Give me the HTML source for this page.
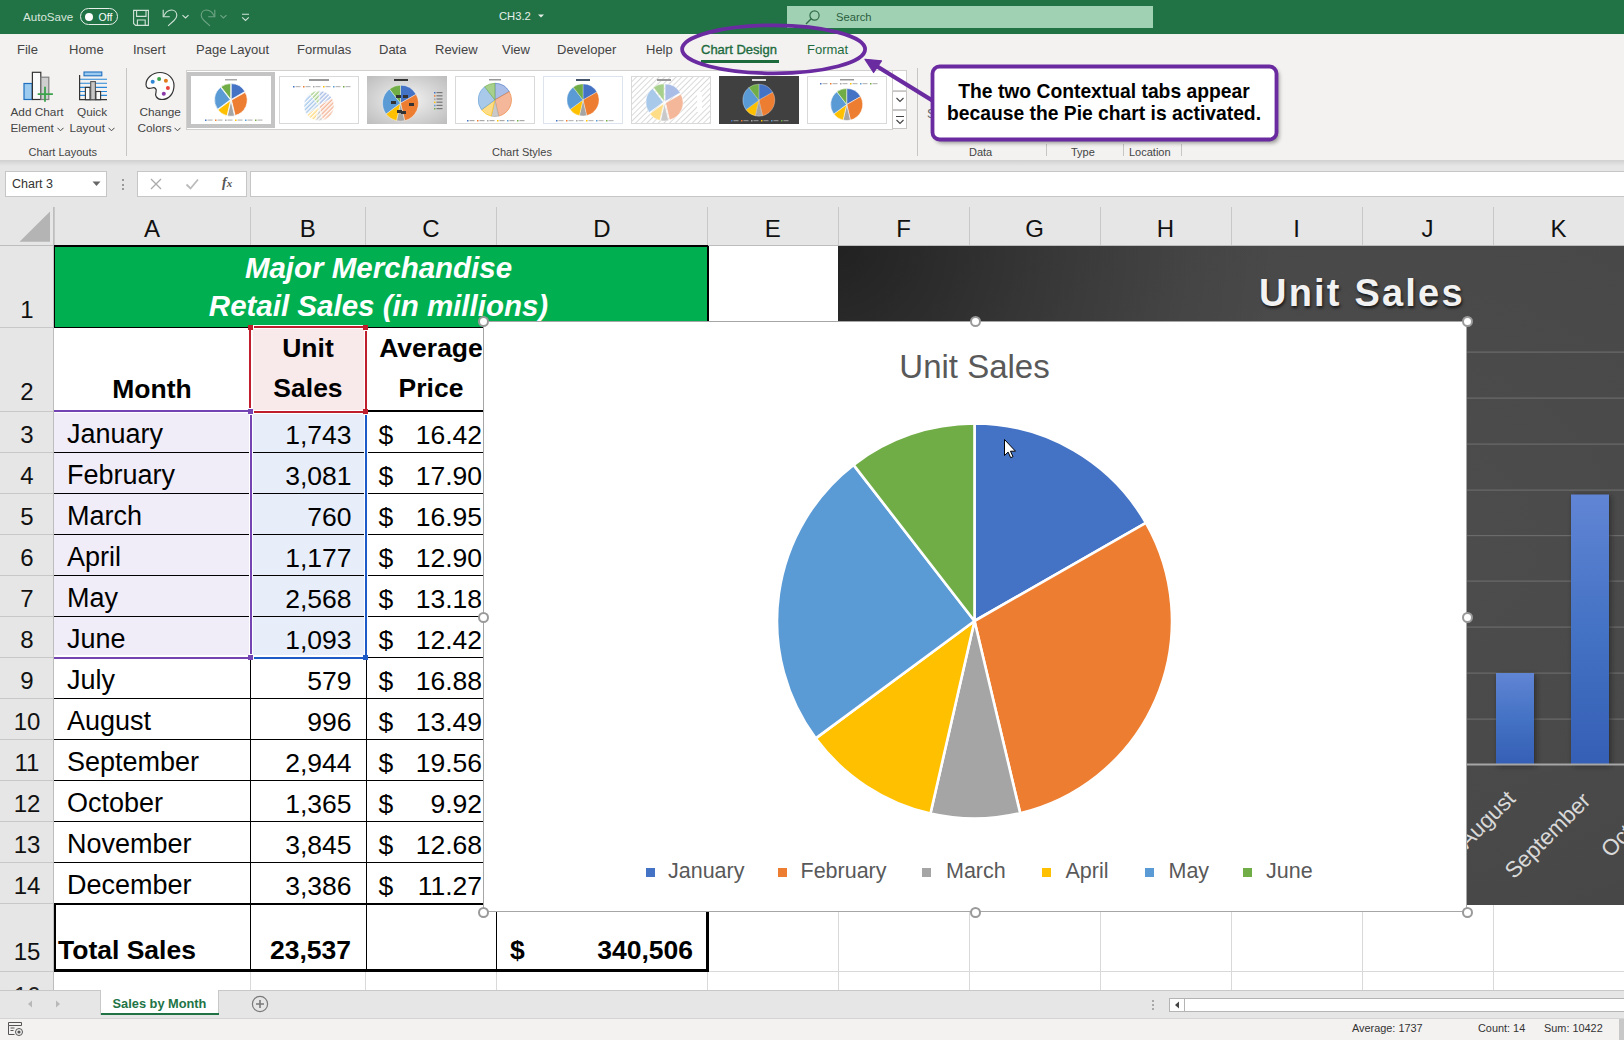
<!DOCTYPE html>
<html><head><meta charset="utf-8">
<style>
*{margin:0;padding:0;box-sizing:border-box}
html,body{width:1624px;height:1040px;overflow:hidden;background:#fff;font-family:"Liberation Sans",sans-serif}
.a{position:absolute}
svg{display:block}
.t{position:absolute;white-space:nowrap;line-height:1}
#title{left:0;top:0;width:1624px;height:34px;background:#217346}
#tabs{left:0;top:34px;width:1624px;height:126px;background:#f3f2f1}
.tab{position:absolute;top:43px;font-size:13px;color:#444;white-space:nowrap;line-height:1}
.rl{position:absolute;font-size:12.5px;color:#444;white-space:nowrap;line-height:1}
.gl{position:absolute;top:147px;font-size:12px;color:#444;white-space:nowrap;line-height:1}
.sep{position:absolute;width:1px;background:#c8c6c4}
.thumb{position:absolute;top:76px;width:80px;height:48px;background:#fff;border:1px solid #d6d6d6}
</style></head><body>

<!-- TITLE BAR -->
<div class="a" id="title"></div>
<div class="t" style="left:23px;top:11px;font-size:11.6px;color:#d8e6dd">AutoSave</div>
<div class="a" style="left:80px;top:8px;width:38px;height:17px;border:1.3px solid #e8efe9;border-radius:9px"></div>
<div class="a" style="left:84.5px;top:12.5px;width:8px;height:8px;border-radius:50%;background:#fff"></div>
<div class="t" style="left:98.5px;top:11.5px;font-size:10.5px;color:#fff">Off</div>
<!-- save icon -->
<svg class="a" style="left:120px;top:0" width="140" height="34" viewBox="120 0 140 34">
<path d="M133.6 10.4H148.4V25.4H135.6L133.6 23.4Z" fill="none" stroke="#d2e3d8" stroke-width="1.1"/>
<path d="M136.6 10.4V16.4H146V10.4M137.4 25.4V20H145.2V25.4" fill="none" stroke="#d2e3d8" stroke-width="1.1"/>
<path d="M163.2 9.8V16.8H169.8" fill="none" stroke="#d2e3d8" stroke-width="1.1"/>
<path d="M163.6 16.4C165.5 12 168.5 10 171.5 10C174.8 10 176.8 12.5 176.8 15.5C176.8 17.5 175.5 19 174 20.5L168.1 25.9" fill="none" stroke="#d2e3d8" stroke-width="1.1"/>
<path d="M182.5 15.1L185.5 17.9L188.5 15.1" fill="none" stroke="#d2e3d8" stroke-width="1.1"/>
<path d="M214.8 9.8V16.8H208.2" fill="none" stroke="#6fa585" stroke-width="1.1"/>
<path d="M214.4 16.4C212.5 12 209.5 10 206.5 10C203.2 10 201.2 12.5 201.2 15.5C201.2 17.5 202.5 19 204 20.5L210 25.9" fill="none" stroke="#6fa585" stroke-width="1.1"/>
<path d="M220.4 15.1L223.4 17.9L226.5 15.1" fill="none" stroke="#6fa585" stroke-width="1.1"/>
<path d="M242 14.2H249M242.2 17.4L245.5 20.4L248.8 17.4" fill="none" stroke="#d2e3d8" stroke-width="1.1"/>
</svg>
<div class="t" style="left:499px;top:11px;font-size:11.2px;color:#e6efe9">CH3.2</div>
<svg class="a" style="left:537.5px;top:14px" width="6" height="4" viewBox="0 0 6 4"><path d="M0 0.5h6L3 3.5z" fill="#e6efe9"/></svg>
<div class="a" style="left:787px;top:6px;width:366px;height:22px;background:#a0d1b2"></div>
<svg class="a" style="left:804px;top:9px" width="17" height="17" viewBox="0 0 17 17"><circle cx="10.5" cy="6.5" r="4.6" fill="none" stroke="#2f6b47" stroke-width="1.2"/><path d="M7.2 9.8L2 15" stroke="#2f6b47" stroke-width="1.3"/></svg>
<div class="t" style="left:836px;top:11.5px;font-size:11.2px;color:#2a5e40">Search</div>

<!-- TABS + RIBBON -->
<div class="a" id="tabs"></div>
<div class="tab" style="left:17px">File</div>
<div class="tab" style="left:69px">Home</div>
<div class="tab" style="left:133px">Insert</div>
<div class="tab" style="left:196px">Page Layout</div>
<div class="tab" style="left:297px">Formulas</div>
<div class="tab" style="left:379px">Data</div>
<div class="tab" style="left:435px">Review</div>
<div class="tab" style="left:502px">View</div>
<div class="tab" style="left:557px">Developer</div>
<div class="tab" style="left:646px">Help</div>
<div class="tab" style="left:701px;color:#1d6b3d;-webkit-text-stroke:0.35px #1d6b3d">Chart Design</div>
<div class="a" style="left:701px;top:60px;width:78px;height:3px;background:#1d6b3d"></div>
<div class="tab" style="left:807px;color:#1d6b3d">Format</div>

<!-- RIBBON_BODY -->
<svg class="a" style="left:0;top:64px" width="190" height="96" viewBox="0 64 190 96">
 <rect x="24" y="83.5" width="8.2" height="16" fill="#9ccbef" stroke="#1f6fc0" stroke-width="1.2"/>
 <rect x="32.4" y="72.3" width="8.4" height="27.2" fill="#fafafa" stroke="#333" stroke-width="1.2"/>
 <rect x="41" y="77.2" width="7.8" height="22.3" fill="#cfcfcf" stroke="#808080" stroke-width="1.2"/>
 <path d="M37.7 94.2H52.9M45 86.8V101.7" stroke="#3aa24a" stroke-width="1.8"/>
 <rect x="84" y="72" width="17.8" height="3.8" fill="#9ccbef" stroke="#1f6fc0" stroke-width="1.1"/>
 <path d="M80 79.2H107M80 83.3H107M80 87.4H107M80 91.5H107M80 95.4H107" stroke="#2a86d6" stroke-width="1.1"/>
 <path d="M79.6 75V99.7H107" fill="none" stroke="#333" stroke-width="1.2"/>
 <rect x="85.4" y="87.4" width="4.6" height="12.3" fill="#fafafa" stroke="#333" stroke-width="1.1"/>
 <rect x="90.7" y="81.6" width="4.7" height="18.1" fill="#c6c6c6" stroke="#555" stroke-width="1.1"/>
 <rect x="95.9" y="91.5" width="4.7" height="8.2" fill="#fafafa" stroke="#333" stroke-width="1.1"/>
 <path d="M160 72.5c-8 0-14 6-14 12 0 4 3 4.5 6 3.5 3-1 5 1 4 4-1 3 0 7.5 6 7.5 7 0 12-6 12-14 0-7-6-13-14-13z" fill="#fdfdfd" stroke="#333" stroke-width="1.2"/>
 <circle cx="152.7" cy="81.8" r="2" fill="#2f86d4"/><circle cx="159.1" cy="79" r="2" fill="#3aa24a"/><circle cx="165.9" cy="80.7" r="2" fill="#e07b1c"/><circle cx="167.9" cy="88" r="2" fill="#e8403a"/><circle cx="163.8" cy="93.8" r="2" fill="#8a3aa8"/>
</svg>
<div class="rl" style="left:10.5px;top:107px;font-size:11.8px">Add Chart</div>
<div class="rl" style="left:10.5px;top:123px;font-size:11.8px">Element</div>
<svg class="a" style="left:57px;top:127px" width="7" height="5" viewBox="0 0 7 5"><path d="M0.5 0.8L3.5 3.8 6.5 0.8" fill="none" stroke="#444" stroke-width="1"/></svg>
<div class="rl" style="left:77px;top:107px;font-size:11.8px">Quick</div>
<div class="rl" style="left:69.5px;top:123px;font-size:11.8px">Layout</div>
<div class="a" style="left:108px;top:127px"><svg width="7" height="5" viewBox="0 0 7 5"><path d="M0.5 0.8L3.5 3.8 6.5 0.8" fill="none" stroke="#444" stroke-width="1"/></svg></div>
<div class="sep" style="left:126px;top:68px;height:88px"></div>
<div class="rl" style="left:139.5px;top:107px;font-size:11.8px">Change</div>
<div class="rl" style="left:137.5px;top:123px;font-size:11.8px">Colors</div>
<div class="a" style="left:174px;top:127px"><svg width="7" height="5" viewBox="0 0 7 5"><path d="M0.5 0.8L3.5 3.8 6.5 0.8" fill="none" stroke="#444" stroke-width="1"/></svg></div>
<div class="gl" style="left:28.5px;font-size:11px">Chart Layouts</div>
<div class="gl" style="left:492px;font-size:11px">Chart Styles</div>
<div class="gl" style="left:969px;font-size:11px">Data</div>
<div class="gl" style="left:1071px;font-size:11px">Type</div>
<div class="gl" style="left:1129px;font-size:11px">Location</div>
<div class="sep" style="left:917px;top:68px;height:88px"></div>
<div class="sep" style="left:1046px;top:144px;height:12px"></div>
<div class="sep" style="left:1123px;top:144px;height:12px"></div>
<div class="sep" style="left:1181px;top:144px;height:12px"></div>
<!-- gallery -->
<div class="a" style="left:186px;top:70px;width:707px;height:60px;background:#fff;border:1px solid #d2d0ce"></div>
<div class="a" style="left:187px;top:72px;width:88px;height:56px;background:#c4c4c4"></div>
<div class="a" style="left:892px;top:70px;width:15px;height:21px;border:1px solid #d2d0ce;background:#fff"></div>
<div class="a" style="left:892px;top:91px;width:15px;height:19px;border:1px solid #c8c6c4;background:#fff"></div>
<div class="a" style="left:892px;top:110px;width:15px;height:19px;border:1px solid #c8c6c4;background:#fff"></div>
<svg class="a" style="left:894.5px;top:96px" width="10" height="8" viewBox="0 0 10 8"><path d="M1.5 2L5 5.5 8.5 2" fill="none" stroke="#444" stroke-width="1.1"/></svg>
<svg class="a" style="left:894.5px;top:114px" width="10" height="12" viewBox="0 0 10 12"><path d="M1 2.5H9M1.5 6L5 9.5 8.5 6" fill="none" stroke="#444" stroke-width="1.1"/></svg>
<!-- THUMBS -->
<svg class="a" style="left:0;top:0" width="900" height="130" viewBox="0 0 900 130"><rect x="191" y="76" width="80" height="48" fill="#fff"/><rect x="225" y="79" width="12" height="1.5" fill="#aaa"/><path d="M231.2,99.4L231.2,83.6A15.8,15.8 0 0 1 244.9,91.5Z" fill="#4472c4" stroke="#fff" stroke-width="0.7"/><path d="M231.5,100.1L245.2,92.3A15.8,15.8 0 0 1 235.1,115.5Z" fill="#ed7d31" stroke="#fff" stroke-width="0.7"/><path d="M230.9,100.5L234.6,115.9A15.8,15.8 0 0 1 227.4,115.9Z" fill="#a5a5a5" stroke="#fff" stroke-width="0.7"/><path d="M230.6,100.4L227.0,115.8A15.8,15.8 0 0 1 217.9,109.8Z" fill="#ffc000" stroke="#fff" stroke-width="0.7"/><path d="M230.3,99.8L217.6,109.2A15.8,15.8 0 0 1 220.6,87.3Z" fill="#5b9bd5" stroke="#fff" stroke-width="0.7"/><path d="M230.7,99.3L221.0,86.8A15.8,15.8 0 0 1 230.7,83.5Z" fill="#70ad47" stroke="#fff" stroke-width="0.7"/><rect x="205.0" y="119.5" width="1.5" height="1.5" fill="#4472c4"/><rect x="207.5" y="119.5" width="5" height="1.2" fill="#bbb"/><rect x="215.0" y="119.5" width="1.5" height="1.5" fill="#ed7d31"/><rect x="217.5" y="119.5" width="5" height="1.2" fill="#bbb"/><rect x="225.0" y="119.5" width="1.5" height="1.5" fill="#a5a5a5"/><rect x="227.5" y="119.5" width="5" height="1.2" fill="#bbb"/><rect x="235.0" y="119.5" width="1.5" height="1.5" fill="#ffc000"/><rect x="237.5" y="119.5" width="5" height="1.2" fill="#bbb"/><rect x="245.0" y="119.5" width="1.5" height="1.5" fill="#5b9bd5"/><rect x="247.5" y="119.5" width="5" height="1.2" fill="#bbb"/><rect x="255.0" y="119.5" width="1.5" height="1.5" fill="#70ad47"/><rect x="257.5" y="119.5" width="5" height="1.2" fill="#bbb"/><rect x="279.5" y="76.5" width="79" height="47" fill="#fff" stroke="#d9d9d9" stroke-width="1"/><rect x="309" y="79" width="20" height="2" fill="#999"/><rect x="293.0" y="86" width="1.5" height="1.5" fill="#4472c4"/><rect x="295.5" y="86" width="5" height="1.2" fill="#bbb"/><rect x="303.0" y="86" width="1.5" height="1.5" fill="#ed7d31"/><rect x="305.5" y="86" width="5" height="1.2" fill="#bbb"/><rect x="313.0" y="86" width="1.5" height="1.5" fill="#a5a5a5"/><rect x="315.5" y="86" width="5" height="1.2" fill="#bbb"/><rect x="323.0" y="86" width="1.5" height="1.5" fill="#ffc000"/><rect x="325.5" y="86" width="5" height="1.2" fill="#bbb"/><rect x="333.0" y="86" width="1.5" height="1.5" fill="#5b9bd5"/><rect x="335.5" y="86" width="5" height="1.2" fill="#bbb"/><rect x="343.0" y="86" width="1.5" height="1.5" fill="#70ad47"/><rect x="345.5" y="86" width="5" height="1.2" fill="#bbb"/><defs><pattern id="st" width="3" height="3" patternUnits="userSpaceOnUse" patternTransform="rotate(45)"><rect width="1.5" height="3" fill="#fff"/></pattern></defs><path d="M319.0,105.7L319.0,90.7A15,15 0 0 1 332.0,98.2Z" fill="#a9bde6" stroke="#fff" stroke-width="0.5"/><path d="M319.0,105.7L332.0,98.2A15,15 0 0 1 322.5,120.3Z" fill="#f4b79a" stroke="#fff" stroke-width="0.5"/><path d="M319.0,105.7L322.5,120.3A15,15 0 0 1 315.7,120.3Z" fill="#c9c9c9" stroke="#fff" stroke-width="0.5"/><path d="M319.0,105.7L315.7,120.3A15,15 0 0 1 306.9,114.6Z" fill="#ffdc86" stroke="#fff" stroke-width="0.5"/><path d="M319.0,105.7L306.9,114.6A15,15 0 0 1 309.8,93.8Z" fill="#a9c9ea" stroke="#fff" stroke-width="0.5"/><path d="M319.0,105.7L309.8,93.8A15,15 0 0 1 319.0,90.7Z" fill="#a8d08d" stroke="#fff" stroke-width="0.5"/><circle cx="319" cy="105.7" r="15.3" fill="url(#st)"/><defs><radialGradient id="g3" cx="0.5" cy="0.5" r="0.7"><stop offset="0" stop-color="#f4f4f4"/><stop offset="1" stop-color="#bdbdbd"/></radialGradient></defs><rect x="367" y="76" width="80" height="48" fill="url(#g3)"/><rect x="394" y="79" width="14" height="2" fill="#333"/><path d="M400.5,103.2L400.5,85.2A18,18 0 0 1 416.1,94.3Z" fill="#4472c4" stroke="#fff" stroke-width="0.4"/><path d="M400.5,103.2L416.1,94.3A18,18 0 0 1 404.7,120.7Z" fill="#ed7d31" stroke="#fff" stroke-width="0.4"/><path d="M400.5,103.2L404.7,120.7A18,18 0 0 1 396.5,120.7Z" fill="#a5a5a5" stroke="#fff" stroke-width="0.4"/><path d="M400.5,103.2L396.5,120.7A18,18 0 0 1 386.0,113.9Z" fill="#ffc000" stroke="#fff" stroke-width="0.4"/><path d="M400.5,103.2L386.0,113.9A18,18 0 0 1 389.5,89.0Z" fill="#5b9bd5" stroke="#fff" stroke-width="0.4"/><path d="M400.5,103.2L389.5,89.0A18,18 0 0 1 400.5,85.2Z" fill="#70ad47" stroke="#fff" stroke-width="0.4"/><rect x="396" y="95" width="5" height="3" fill="#333"/><rect x="403" y="95" width="5" height="3" fill="#333"/><rect x="391" y="101" width="5" height="3" fill="#333"/><rect x="397" y="110" width="5" height="3" fill="#333"/><rect x="401" y="111" width="5" height="3" fill="#333"/><rect x="409" y="103" width="5" height="3" fill="#333"/><rect x="434" y="92.0" width="1.5" height="1.5" fill="#4472c4"/><rect x="436.5" y="92.0" width="6" height="1.2" fill="#777"/><rect x="434" y="95.2" width="1.5" height="1.5" fill="#ed7d31"/><rect x="436.5" y="95.2" width="6" height="1.2" fill="#777"/><rect x="434" y="98.4" width="1.5" height="1.5" fill="#a5a5a5"/><rect x="436.5" y="98.4" width="6" height="1.2" fill="#777"/><rect x="434" y="101.6" width="1.5" height="1.5" fill="#ffc000"/><rect x="436.5" y="101.6" width="6" height="1.2" fill="#777"/><rect x="434" y="104.8" width="1.5" height="1.5" fill="#5b9bd5"/><rect x="436.5" y="104.8" width="6" height="1.2" fill="#777"/><rect x="434" y="108.0" width="1.5" height="1.5" fill="#70ad47"/><rect x="436.5" y="108.0" width="6" height="1.2" fill="#777"/><rect x="455.5" y="76.5" width="79" height="47" fill="#fff" stroke="#d9d9d9" stroke-width="1"/><rect x="489" y="79" width="12" height="1.5" fill="#999"/><path d="M494.9,99.9L494.9,83.3A16.6,16.6 0 0 1 509.3,91.7Z" fill="#a9bde6" stroke="#4472c4" stroke-width="0.6"/><path d="M494.9,99.9L509.3,91.7A16.6,16.6 0 0 1 498.7,116.1Z" fill="#f4b79a" stroke="#ed7d31" stroke-width="0.6"/><path d="M494.9,99.9L498.7,116.1A16.6,16.6 0 0 1 491.2,116.1Z" fill="#c9c9c9" stroke="#a5a5a5" stroke-width="0.6"/><path d="M494.9,99.9L491.2,116.1A16.6,16.6 0 0 1 481.5,109.8Z" fill="#ffdc86" stroke="#ffc000" stroke-width="0.6"/><path d="M494.9,99.9L481.5,109.8A16.6,16.6 0 0 1 484.7,86.8Z" fill="#a9c9ea" stroke="#5b9bd5" stroke-width="0.6"/><path d="M494.9,99.9L484.7,86.8A16.6,16.6 0 0 1 494.9,83.3Z" fill="#a8d08d" stroke="#70ad47" stroke-width="0.6"/><rect x="467.0" y="120" width="1.5" height="1.5" fill="#4472c4"/><rect x="469.5" y="120" width="5" height="1.2" fill="#aaa"/><rect x="477.0" y="120" width="1.5" height="1.5" fill="#ed7d31"/><rect x="479.5" y="120" width="5" height="1.2" fill="#aaa"/><rect x="487.0" y="120" width="1.5" height="1.5" fill="#a5a5a5"/><rect x="489.5" y="120" width="5" height="1.2" fill="#aaa"/><rect x="497.0" y="120" width="1.5" height="1.5" fill="#ffc000"/><rect x="499.5" y="120" width="5" height="1.2" fill="#aaa"/><rect x="507.0" y="120" width="1.5" height="1.5" fill="#5b9bd5"/><rect x="509.5" y="120" width="5" height="1.2" fill="#aaa"/><rect x="517.0" y="120" width="1.5" height="1.5" fill="#70ad47"/><rect x="519.5" y="120" width="5" height="1.2" fill="#aaa"/><rect x="543.5" y="76.5" width="79" height="47" fill="#fff" stroke="#dde4ee" stroke-width="1"/><rect x="576" y="79" width="14" height="2" fill="#44546a"/><path d="M583.0,99.9L583.0,83.9A16,16 0 0 1 596.9,92.0Z" fill="#4472c4" stroke="#fff" stroke-width="0.3"/><path d="M583.0,99.9L596.9,92.0A16,16 0 0 1 586.7,115.5Z" fill="#ed7d31" stroke="#fff" stroke-width="0.3"/><path d="M583.0,99.9L586.7,115.5A16,16 0 0 1 579.4,115.5Z" fill="#a5a5a5" stroke="#fff" stroke-width="0.3"/><path d="M583.0,99.9L579.4,115.5A16,16 0 0 1 570.1,109.4Z" fill="#ffc000" stroke="#fff" stroke-width="0.3"/><path d="M583.0,99.9L570.1,109.4A16,16 0 0 1 573.2,87.2Z" fill="#5b9bd5" stroke="#fff" stroke-width="0.3"/><path d="M583.0,99.9L573.2,87.2A16,16 0 0 1 583.0,83.9Z" fill="#70ad47" stroke="#fff" stroke-width="0.3"/><rect x="556.0" y="120" width="1.5" height="1.5" fill="#4472c4"/><rect x="558.5" y="120" width="5" height="1.2" fill="#bbb"/><rect x="566.0" y="120" width="1.5" height="1.5" fill="#ed7d31"/><rect x="568.5" y="120" width="5" height="1.2" fill="#bbb"/><rect x="576.0" y="120" width="1.5" height="1.5" fill="#a5a5a5"/><rect x="578.5" y="120" width="5" height="1.2" fill="#bbb"/><rect x="586.0" y="120" width="1.5" height="1.5" fill="#ffc000"/><rect x="588.5" y="120" width="5" height="1.2" fill="#bbb"/><rect x="596.0" y="120" width="1.5" height="1.5" fill="#5b9bd5"/><rect x="598.5" y="120" width="5" height="1.2" fill="#bbb"/><rect x="606.0" y="120" width="1.5" height="1.5" fill="#70ad47"/><rect x="608.5" y="120" width="5" height="1.2" fill="#bbb"/><defs><pattern id="st6" width="4" height="4" patternUnits="userSpaceOnUse" patternTransform="rotate(45)"><rect width="4" height="4" fill="#fff"/><rect width="1" height="4" fill="#d9d9d9"/></pattern></defs><rect x="631.5" y="76.5" width="79" height="47" fill="url(#st6)" stroke="#d9d9d9" stroke-width="1"/><rect x="657" y="79" width="14" height="2" fill="#999"/><path d="M665.1,101.4L665.1,83.9A17.5,17.5 0 0 1 680.3,92.7Z" fill="#a9bde6" stroke="#fff" stroke-width="0.5"/><path d="M665.6,102.9L680.8,94.2A17.5,17.5 0 0 1 669.6,119.9Z" fill="#f4b79a" stroke="#fff" stroke-width="0.5"/><path d="M664.5,103.6L668.6,120.6A17.5,17.5 0 0 1 660.6,120.7Z" fill="#c9c9c9" stroke="#fff" stroke-width="0.5"/><path d="M663.8,103.4L659.9,120.5A17.5,17.5 0 0 1 649.8,113.8Z" fill="#ffdc86" stroke="#fff" stroke-width="0.5"/><path d="M663.3,102.2L649.2,112.6A17.5,17.5 0 0 1 652.6,88.4Z" fill="#a9c9ea" stroke="#fff" stroke-width="0.5"/><path d="M664.1,101.3L653.4,87.4A17.5,17.5 0 0 1 664.1,83.8Z" fill="#a8d08d" stroke="#fff" stroke-width="0.5"/><rect x="697" y="92" width="5" height="20" fill="#fff"/><rect x="719" y="76" width="80" height="48" fill="#404040"/><rect x="752" y="79" width="14" height="2" fill="#ddd"/><path d="M758.8,100.2L758.8,84.2A16,16 0 0 1 772.7,92.3Z" fill="#4472c4" stroke="#fff" stroke-width="0.3"/><path d="M758.8,100.2L772.7,92.3A16,16 0 0 1 762.5,115.8Z" fill="#ed7d31" stroke="#fff" stroke-width="0.3"/><path d="M758.8,100.2L762.5,115.8A16,16 0 0 1 755.2,115.8Z" fill="#a5a5a5" stroke="#fff" stroke-width="0.3"/><path d="M758.8,100.2L755.2,115.8A16,16 0 0 1 745.9,109.7Z" fill="#ffc000" stroke="#fff" stroke-width="0.3"/><path d="M758.8,100.2L745.9,109.7A16,16 0 0 1 749.0,87.5Z" fill="#5b9bd5" stroke="#fff" stroke-width="0.3"/><path d="M758.8,100.2L749.0,87.5A16,16 0 0 1 758.8,84.2Z" fill="#70ad47" stroke="#fff" stroke-width="0.3"/><rect x="731.0" y="120" width="1.5" height="1.5" fill="#4472c4"/><rect x="733.5" y="120" width="5" height="1.2" fill="#888"/><rect x="741.0" y="120" width="1.5" height="1.5" fill="#ed7d31"/><rect x="743.5" y="120" width="5" height="1.2" fill="#888"/><rect x="751.0" y="120" width="1.5" height="1.5" fill="#a5a5a5"/><rect x="753.5" y="120" width="5" height="1.2" fill="#888"/><rect x="761.0" y="120" width="1.5" height="1.5" fill="#ffc000"/><rect x="763.5" y="120" width="5" height="1.2" fill="#888"/><rect x="771.0" y="120" width="1.5" height="1.5" fill="#5b9bd5"/><rect x="773.5" y="120" width="5" height="1.2" fill="#888"/><rect x="781.0" y="120" width="1.5" height="1.5" fill="#70ad47"/><rect x="783.5" y="120" width="5" height="1.2" fill="#888"/><rect x="807.5" y="76.5" width="79" height="47" fill="#fff" stroke="#d9d9d9" stroke-width="1"/><rect x="840" y="79" width="14" height="1.5" fill="#999"/><rect x="820.0" y="83" width="1.5" height="1.5" fill="#4472c4"/><rect x="822.5" y="83" width="5" height="1.2" fill="#bbb"/><rect x="830.0" y="83" width="1.5" height="1.5" fill="#ed7d31"/><rect x="832.5" y="83" width="5" height="1.2" fill="#bbb"/><rect x="840.0" y="83" width="1.5" height="1.5" fill="#a5a5a5"/><rect x="842.5" y="83" width="5" height="1.2" fill="#bbb"/><rect x="850.0" y="83" width="1.5" height="1.5" fill="#ffc000"/><rect x="852.5" y="83" width="5" height="1.2" fill="#bbb"/><rect x="860.0" y="83" width="1.5" height="1.5" fill="#5b9bd5"/><rect x="862.5" y="83" width="5" height="1.2" fill="#bbb"/><rect x="870.0" y="83" width="1.5" height="1.5" fill="#70ad47"/><rect x="872.5" y="83" width="5" height="1.2" fill="#bbb"/><path d="M846.7,104.5L846.7,88.5A16,16 0 0 1 860.6,96.6Z" fill="#4472c4" stroke="#fff" stroke-width="0.5"/><path d="M846.7,104.5L860.6,96.6A16,16 0 0 1 850.4,120.1Z" fill="#ed7d31" stroke="#fff" stroke-width="0.5"/><path d="M846.7,104.5L850.4,120.1A16,16 0 0 1 843.1,120.1Z" fill="#a5a5a5" stroke="#fff" stroke-width="0.5"/><path d="M846.7,104.5L843.1,120.1A16,16 0 0 1 833.8,114.0Z" fill="#ffc000" stroke="#fff" stroke-width="0.5"/><path d="M846.7,104.5L833.8,114.0A16,16 0 0 1 836.9,91.8Z" fill="#5b9bd5" stroke="#fff" stroke-width="0.5"/><path d="M846.7,104.5L836.9,91.8A16,16 0 0 1 846.7,88.5Z" fill="#70ad47" stroke="#fff" stroke-width="0.5"/></svg>
<!-- /THUMBS -->

<!-- FORMULA_BAR -->
<div class="a" style="left:0px;top:160px;width:1624px;height:47px;background:#e6e6e6;"></div>
<div class="a" style="left:0px;top:160px;width:1624px;height:6px;background:linear-gradient(#d0d0d0,#e6e6e6);"></div>
<div class="a" style="left:5px;top:171px;width:102px;height:26px;background:#fff;border:1px solid #c6c6c6"></div>
<div class="t" style="top:178.4px;font-size:12.5px;color:#333;left:12px;">Chart 3</div>
<svg class="a" style="left:92px;top:181px" width="9" height="6" viewBox="0 0 9 6"><path d="M0.5 0.5h8L4.5 5z" fill="#666"/></svg>
<div class="a" style="left:121.5px;top:179px;width:2px;height:2px;background:#999;"></div>
<div class="a" style="left:121.5px;top:183.5px;width:2px;height:2px;background:#999;"></div>
<div class="a" style="left:121.5px;top:188px;width:2px;height:2px;background:#999;"></div>
<div class="a" style="left:137px;top:171px;width:110px;height:26px;background:#fff;border:1px solid #c6c6c6"></div>
<svg class="a" style="left:149px;top:178px" width="14" height="12" viewBox="0 0 14 12"><path d="M2 1l10 10M12 1L2 11" stroke="#aaa" stroke-width="1.3"/></svg>
<svg class="a" style="left:185px;top:178px" width="14" height="12" viewBox="0 0 14 12"><path d="M1.5 6.5l4 4L13 1.5" fill="none" stroke="#bbb" stroke-width="1.8"/></svg>
<div class="t" style="left:222px;top:176px;font-family:'Liberation Serif',serif;font-style:italic;font-weight:bold;font-size:14px;color:#555">f<span style="font-size:11px">x</span></div>
<div class="a" style="left:250px;top:171px;width:1374px;height:26px;background:#fff;border:1px solid #c6c6c6;border-right:none"></div>
<div class="a" style="left:0px;top:207px;width:1624px;height:39px;background:#e6e6e6;"></div>
<div class="a" style="left:0px;top:245px;width:1624px;height:1px;background:#bdbdbd;"></div>
<div class="a" style="left:54px;top:207px;width:1px;height:38px;background:#c8c8c8;"></div>
<div class="a" style="left:250px;top:207px;width:1px;height:38px;background:#c8c8c8;"></div>
<div class="a" style="left:365px;top:207px;width:1px;height:38px;background:#c8c8c8;"></div>
<div class="a" style="left:496px;top:207px;width:1px;height:38px;background:#c8c8c8;"></div>
<div class="a" style="left:707px;top:207px;width:1px;height:38px;background:#c8c8c8;"></div>
<div class="a" style="left:838px;top:207px;width:1px;height:38px;background:#c8c8c8;"></div>
<div class="a" style="left:969px;top:207px;width:1px;height:38px;background:#c8c8c8;"></div>
<div class="a" style="left:1100px;top:207px;width:1px;height:38px;background:#c8c8c8;"></div>
<div class="a" style="left:1231px;top:207px;width:1px;height:38px;background:#c8c8c8;"></div>
<div class="a" style="left:1362px;top:207px;width:1px;height:38px;background:#c8c8c8;"></div>
<div class="a" style="left:1493px;top:207px;width:1px;height:38px;background:#c8c8c8;"></div>
<div class="t" style="top:217.2px;font-size:24px;color:#111;left:-148.0px;width:600px;text-align:center;">A</div>
<div class="t" style="top:217.2px;font-size:24px;color:#111;left:7.75px;width:600px;text-align:center;">B</div>
<div class="t" style="top:217.2px;font-size:24px;color:#111;left:131.0px;width:600px;text-align:center;">C</div>
<div class="t" style="top:217.2px;font-size:24px;color:#111;left:302.0px;width:600px;text-align:center;">D</div>
<div class="t" style="top:217.2px;font-size:24px;color:#111;left:472.75px;width:600px;text-align:center;">E</div>
<div class="t" style="top:217.2px;font-size:24px;color:#111;left:603.5px;width:600px;text-align:center;">F</div>
<div class="t" style="top:217.2px;font-size:24px;color:#111;left:734.5px;width:600px;text-align:center;">G</div>
<div class="t" style="top:217.2px;font-size:24px;color:#111;left:865.5px;width:600px;text-align:center;">H</div>
<div class="t" style="top:217.2px;font-size:24px;color:#111;left:996.5px;width:600px;text-align:center;">I</div>
<div class="t" style="top:217.2px;font-size:24px;color:#111;left:1127.5px;width:600px;text-align:center;">J</div>
<div class="t" style="top:217.2px;font-size:24px;color:#111;left:1258.5px;width:600px;text-align:center;">K</div>
<svg class="a" style="left:0;top:207px" width="54" height="39" viewBox="0 207 54 39"><path d="M50 211.5V241.7H19.5z" fill="#b4b4b4"/></svg>
<div class="a" style="left:0px;top:246px;width:53px;height:745px;background:#e6e6e6;"></div>
<div class="a" style="left:53px;top:207px;width:1px;height:784px;background:#bdbdbd;"></div>
<div class="a" style="left:0px;top:327px;width:53px;height:1px;background:#c8c8c8;"></div>
<div class="a" style="left:0px;top:411px;width:53px;height:1px;background:#c8c8c8;"></div>
<div class="a" style="left:0px;top:452px;width:53px;height:1px;background:#c8c8c8;"></div>
<div class="a" style="left:0px;top:493px;width:53px;height:1px;background:#c8c8c8;"></div>
<div class="a" style="left:0px;top:534px;width:53px;height:1px;background:#c8c8c8;"></div>
<div class="a" style="left:0px;top:575px;width:53px;height:1px;background:#c8c8c8;"></div>
<div class="a" style="left:0px;top:616px;width:53px;height:1px;background:#c8c8c8;"></div>
<div class="a" style="left:0px;top:657px;width:53px;height:1px;background:#c8c8c8;"></div>
<div class="a" style="left:0px;top:698px;width:53px;height:1px;background:#c8c8c8;"></div>
<div class="a" style="left:0px;top:739px;width:53px;height:1px;background:#c8c8c8;"></div>
<div class="a" style="left:0px;top:780px;width:53px;height:1px;background:#c8c8c8;"></div>
<div class="a" style="left:0px;top:821px;width:53px;height:1px;background:#c8c8c8;"></div>
<div class="a" style="left:0px;top:862px;width:53px;height:1px;background:#c8c8c8;"></div>
<div class="a" style="left:0px;top:903px;width:53px;height:1px;background:#c8c8c8;"></div>
<div class="a" style="left:0px;top:971px;width:53px;height:1px;background:#c8c8c8;"></div>
<div class="a" style="left:0px;top:1010px;width:53px;height:1px;background:#c8c8c8;"></div>
<div class="t" style="top:297.7px;font-size:24px;color:#111;left:-273px;width:600px;text-align:center;">1</div>
<div class="t" style="top:379.7px;font-size:24px;color:#111;left:-273px;width:600px;text-align:center;">2</div>
<div class="t" style="top:423.2px;font-size:24px;color:#111;left:-273px;width:600px;text-align:center;">3</div>
<div class="t" style="top:464.2px;font-size:24px;color:#111;left:-273px;width:600px;text-align:center;">4</div>
<div class="t" style="top:505.2px;font-size:24px;color:#111;left:-273px;width:600px;text-align:center;">5</div>
<div class="t" style="top:546.2px;font-size:24px;color:#111;left:-273px;width:600px;text-align:center;">6</div>
<div class="t" style="top:587.2px;font-size:24px;color:#111;left:-273px;width:600px;text-align:center;">7</div>
<div class="t" style="top:628.2px;font-size:24px;color:#111;left:-273px;width:600px;text-align:center;">8</div>
<div class="t" style="top:669.2px;font-size:24px;color:#111;left:-273px;width:600px;text-align:center;">9</div>
<div class="t" style="top:710.2px;font-size:24px;color:#111;left:-273px;width:600px;text-align:center;">10</div>
<div class="t" style="top:751.2px;font-size:24px;color:#111;left:-273px;width:600px;text-align:center;">11</div>
<div class="t" style="top:792.2px;font-size:24px;color:#111;left:-273px;width:600px;text-align:center;">12</div>
<div class="t" style="top:833.2px;font-size:24px;color:#111;left:-273px;width:600px;text-align:center;">13</div>
<div class="t" style="top:874.2px;font-size:24px;color:#111;left:-273px;width:600px;text-align:center;">14</div>
<div class="t" style="top:939.7px;font-size:24px;color:#111;left:-273px;width:600px;text-align:center;">15</div>
<div class="t" style="top:983.7px;font-size:24px;color:#222;left:-273px;width:600px;text-align:center;">16</div>
<div class="a" style="left:54px;top:246px;width:1570px;height:745px;background:#fff;"></div>
<div class="a" style="left:707px;top:327px;width:917px;height:1px;background:#d9d9d9;"></div>
<div class="a" style="left:707px;top:411px;width:917px;height:1px;background:#d9d9d9;"></div>
<div class="a" style="left:707px;top:452px;width:917px;height:1px;background:#d9d9d9;"></div>
<div class="a" style="left:707px;top:493px;width:917px;height:1px;background:#d9d9d9;"></div>
<div class="a" style="left:707px;top:534px;width:917px;height:1px;background:#d9d9d9;"></div>
<div class="a" style="left:707px;top:575px;width:917px;height:1px;background:#d9d9d9;"></div>
<div class="a" style="left:707px;top:616px;width:917px;height:1px;background:#d9d9d9;"></div>
<div class="a" style="left:707px;top:657px;width:917px;height:1px;background:#d9d9d9;"></div>
<div class="a" style="left:707px;top:698px;width:917px;height:1px;background:#d9d9d9;"></div>
<div class="a" style="left:707px;top:739px;width:917px;height:1px;background:#d9d9d9;"></div>
<div class="a" style="left:707px;top:780px;width:917px;height:1px;background:#d9d9d9;"></div>
<div class="a" style="left:707px;top:821px;width:917px;height:1px;background:#d9d9d9;"></div>
<div class="a" style="left:707px;top:862px;width:917px;height:1px;background:#d9d9d9;"></div>
<div class="a" style="left:707px;top:903px;width:917px;height:1px;background:#d9d9d9;"></div>
<div class="a" style="left:707px;top:971px;width:917px;height:1px;background:#d9d9d9;"></div>
<div class="a" style="left:707px;top:1010px;width:917px;height:1px;background:#d9d9d9;"></div>
<div class="a" style="left:707px;top:246px;width:1px;height:745px;background:#d9d9d9;"></div>
<div class="a" style="left:838px;top:246px;width:1px;height:745px;background:#d9d9d9;"></div>
<div class="a" style="left:969px;top:246px;width:1px;height:745px;background:#d9d9d9;"></div>
<div class="a" style="left:1100px;top:246px;width:1px;height:745px;background:#d9d9d9;"></div>
<div class="a" style="left:1231px;top:246px;width:1px;height:745px;background:#d9d9d9;"></div>
<div class="a" style="left:1362px;top:246px;width:1px;height:745px;background:#d9d9d9;"></div>
<div class="a" style="left:1493px;top:246px;width:1px;height:745px;background:#d9d9d9;"></div>
<div class="a" style="left:250px;top:971px;width:1px;height:20px;background:#d9d9d9;"></div>
<div class="a" style="left:365px;top:971px;width:1px;height:20px;background:#d9d9d9;"></div>
<div class="a" style="left:496px;top:971px;width:1px;height:20px;background:#d9d9d9;"></div>
<div class="a" style="left:707px;top:971px;width:1px;height:20px;background:#d9d9d9;"></div>
<div class="a" style="left:54px;top:412px;width:195px;height:243px;background:#f0ecf8;"></div>
<div class="a" style="left:253px;top:414px;width:111px;height:241px;background:#e8eef9;"></div>
<div class="a" style="left:253px;top:329px;width:111px;height:81px;background:#f8e9ea;"></div>
<div class="a" style="left:54px;top:452px;width:653px;height:1px;background:#000;"></div>
<div class="a" style="left:54px;top:493px;width:653px;height:1px;background:#000;"></div>
<div class="a" style="left:54px;top:534px;width:653px;height:1px;background:#000;"></div>
<div class="a" style="left:54px;top:575px;width:653px;height:1px;background:#000;"></div>
<div class="a" style="left:54px;top:616px;width:653px;height:1px;background:#000;"></div>
<div class="a" style="left:54px;top:657px;width:653px;height:1px;background:#000;"></div>
<div class="a" style="left:54px;top:698px;width:653px;height:1px;background:#000;"></div>
<div class="a" style="left:54px;top:739px;width:653px;height:1px;background:#000;"></div>
<div class="a" style="left:54px;top:780px;width:653px;height:1px;background:#000;"></div>
<div class="a" style="left:54px;top:821px;width:653px;height:1px;background:#000;"></div>
<div class="a" style="left:54px;top:862px;width:653px;height:1px;background:#000;"></div>
<div class="a" style="left:366px;top:410px;width:341px;height:2px;background:#000;"></div>
<div class="a" style="left:54px;top:327px;width:653px;height:1px;background:#000;"></div>
<div class="a" style="left:250px;top:327px;width:1px;height:577px;background:#000;"></div>
<div class="a" style="left:366px;top:327px;width:1px;height:577px;background:#000;"></div>
<div class="a" style="left:496px;top:327px;width:1px;height:577px;background:#000;"></div>
<div class="a" style="left:706px;top:246px;width:3px;height:726px;background:#000;"></div>
<div class="a" style="left:54px;top:903px;width:654px;height:2px;background:#000;"></div>
<div class="a" style="left:54px;top:969px;width:654px;height:3px;background:#000;"></div>
<div class="a" style="left:54px;top:904px;width:2px;height:67px;background:#000;"></div>
<div class="a" style="left:250px;top:904px;width:1px;height:66px;background:#000;"></div>
<div class="a" style="left:366px;top:904px;width:1px;height:66px;background:#000;"></div>
<div class="a" style="left:496px;top:904px;width:1px;height:66px;background:#000;"></div>
<div class="a" style="left:54px;top:246px;width:653px;height:81px;background:#00b050;"></div>
<div class="a" style="left:54px;top:245px;width:654px;height:2px;background:#000;"></div>
<div class="a" style="left:54px;top:246px;width:1px;height:81px;background:#000;"></div>
<div class="t" style="top:253.2px;font-size:29.5px;color:#fff;font-weight:bold;font-style:italic;left:78.5px;width:600px;text-align:center;">Major Merchandise</div>
<div class="t" style="top:291.0px;font-size:29.5px;color:#fff;font-weight:bold;font-style:italic;left:78.5px;width:600px;text-align:center;">Retail Sales (in millions)</div>
<div class="a" style="left:54px;top:409px;width:196px;height:4px;background:#fff;"></div>
<div class="a" style="left:54px;top:656px;width:196px;height:4px;background:#fff;"></div>
<div class="a" style="left:249px;top:410px;width:4px;height:248px;background:#fff;"></div>
<div class="a" style="left:250px;top:656px;width:118px;height:4px;background:#fff;"></div>
<div class="a" style="left:364px;top:412px;width:4px;height:246px;background:#fff;"></div>
<div class="a" style="left:248px;top:325px;width:4px;height:88px;background:#fff;"></div>
<div class="a" style="left:364px;top:325px;width:4px;height:88px;background:#fff;"></div>
<div class="a" style="left:250px;top:325px;width:118px;height:4px;background:#fff;"></div>
<div class="a" style="left:250px;top:410px;width:118px;height:4px;background:#fff;"></div>
<div class="a" style="left:54px;top:410px;width:194px;height:2px;background:#7444b2;"></div>
<div class="a" style="left:54px;top:657px;width:194px;height:2px;background:#7444b2;"></div>
<div class="a" style="left:250px;top:415px;width:2px;height:239px;background:#7444b2;"></div>
<div class="a" style="left:254px;top:657px;width:110px;height:2px;background:#1f5bc6;"></div>
<div class="a" style="left:365px;top:415px;width:2px;height:240px;background:#1f5bc6;"></div>
<div class="a" style="left:249px;top:330px;width:2px;height:78px;background:#bf1f2c;"></div>
<div class="a" style="left:365px;top:331px;width:2px;height:78px;background:#bf1f2c;"></div>
<div class="a" style="left:254px;top:326px;width:109px;height:2px;background:#bf1f2c;"></div>
<div class="a" style="left:254px;top:411px;width:109px;height:2px;background:#bf1f2c;"></div>
<div class="a" style="left:248px;top:409px;width:5px;height:5px;background:#7444b2;"></div>
<div class="a" style="left:248px;top:655px;width:5px;height:5px;background:#7444b2;"></div>
<div class="a" style="left:363px;top:655px;width:5px;height:5px;background:#1f5bc6;"></div>
<div class="a" style="left:363px;top:325px;width:5px;height:5px;background:#bf1f2c;"></div>
<div class="a" style="left:363px;top:409px;width:5px;height:5px;background:#bf1f2c;"></div>
<div class="a" style="left:248px;top:325px;width:5px;height:5px;background:#bf1f2c;"></div>
<div class="t" style="top:376.2px;font-size:26.5px;color:#000;font-weight:bold;left:-148px;width:600px;text-align:center;">Month</div>
<div class="t" style="top:334.6px;font-size:26.5px;color:#000;font-weight:bold;left:8px;width:600px;text-align:center;">Unit</div>
<div class="t" style="top:375.4px;font-size:26.5px;color:#000;font-weight:bold;left:8px;width:600px;text-align:center;">Sales</div>
<div class="t" style="top:334.6px;font-size:26.5px;color:#000;font-weight:bold;left:131px;width:600px;text-align:center;">Average</div>
<div class="t" style="top:375.4px;font-size:26.5px;color:#000;font-weight:bold;left:131px;width:600px;text-align:center;">Price</div>
<div class="t" style="top:421.3px;font-size:27px;color:#000;left:67px;">January</div>
<div class="t" style="top:421.8px;font-size:26.5px;color:#000;right:1272.5px;">1,743</div>
<div class="t" style="top:421.8px;font-size:26.5px;color:#000;left:378.5px;">$</div>
<div class="t" style="top:421.8px;font-size:26.5px;color:#000;right:1142px;">16.42</div>
<div class="t" style="top:462.3px;font-size:27px;color:#000;left:67px;">February</div>
<div class="t" style="top:462.8px;font-size:26.5px;color:#000;right:1272.5px;">3,081</div>
<div class="t" style="top:462.8px;font-size:26.5px;color:#000;left:378.5px;">$</div>
<div class="t" style="top:462.8px;font-size:26.5px;color:#000;right:1142px;">17.90</div>
<div class="t" style="top:503.3px;font-size:27px;color:#000;left:67px;">March</div>
<div class="t" style="top:503.8px;font-size:26.5px;color:#000;right:1272.5px;">760</div>
<div class="t" style="top:503.8px;font-size:26.5px;color:#000;left:378.5px;">$</div>
<div class="t" style="top:503.8px;font-size:26.5px;color:#000;right:1142px;">16.95</div>
<div class="t" style="top:544.3px;font-size:27px;color:#000;left:67px;">April</div>
<div class="t" style="top:544.8px;font-size:26.5px;color:#000;right:1272.5px;">1,177</div>
<div class="t" style="top:544.8px;font-size:26.5px;color:#000;left:378.5px;">$</div>
<div class="t" style="top:544.8px;font-size:26.5px;color:#000;right:1142px;">12.90</div>
<div class="t" style="top:585.3px;font-size:27px;color:#000;left:67px;">May</div>
<div class="t" style="top:585.8px;font-size:26.5px;color:#000;right:1272.5px;">2,568</div>
<div class="t" style="top:585.8px;font-size:26.5px;color:#000;left:378.5px;">$</div>
<div class="t" style="top:585.8px;font-size:26.5px;color:#000;right:1142px;">13.18</div>
<div class="t" style="top:626.3px;font-size:27px;color:#000;left:67px;">June</div>
<div class="t" style="top:626.8px;font-size:26.5px;color:#000;right:1272.5px;">1,093</div>
<div class="t" style="top:626.8px;font-size:26.5px;color:#000;left:378.5px;">$</div>
<div class="t" style="top:626.8px;font-size:26.5px;color:#000;right:1142px;">12.42</div>
<div class="t" style="top:667.3px;font-size:27px;color:#000;left:67px;">July</div>
<div class="t" style="top:667.8px;font-size:26.5px;color:#000;right:1272.5px;">579</div>
<div class="t" style="top:667.8px;font-size:26.5px;color:#000;left:378.5px;">$</div>
<div class="t" style="top:667.8px;font-size:26.5px;color:#000;right:1142px;">16.88</div>
<div class="t" style="top:708.3px;font-size:27px;color:#000;left:67px;">August</div>
<div class="t" style="top:708.8px;font-size:26.5px;color:#000;right:1272.5px;">996</div>
<div class="t" style="top:708.8px;font-size:26.5px;color:#000;left:378.5px;">$</div>
<div class="t" style="top:708.8px;font-size:26.5px;color:#000;right:1142px;">13.49</div>
<div class="t" style="top:749.3px;font-size:27px;color:#000;left:67px;">September</div>
<div class="t" style="top:749.8px;font-size:26.5px;color:#000;right:1272.5px;">2,944</div>
<div class="t" style="top:749.8px;font-size:26.5px;color:#000;left:378.5px;">$</div>
<div class="t" style="top:749.8px;font-size:26.5px;color:#000;right:1142px;">19.56</div>
<div class="t" style="top:790.3px;font-size:27px;color:#000;left:67px;">October</div>
<div class="t" style="top:790.8px;font-size:26.5px;color:#000;right:1272.5px;">1,365</div>
<div class="t" style="top:790.8px;font-size:26.5px;color:#000;left:378.5px;">$</div>
<div class="t" style="top:790.8px;font-size:26.5px;color:#000;right:1142px;">9.92</div>
<div class="t" style="top:831.3px;font-size:27px;color:#000;left:67px;">November</div>
<div class="t" style="top:831.8px;font-size:26.5px;color:#000;right:1272.5px;">3,845</div>
<div class="t" style="top:831.8px;font-size:26.5px;color:#000;left:378.5px;">$</div>
<div class="t" style="top:831.8px;font-size:26.5px;color:#000;right:1142px;">12.68</div>
<div class="t" style="top:872.3px;font-size:27px;color:#000;left:67px;">December</div>
<div class="t" style="top:872.8px;font-size:26.5px;color:#000;right:1272.5px;">3,386</div>
<div class="t" style="top:872.8px;font-size:26.5px;color:#000;left:378.5px;">$</div>
<div class="t" style="top:872.8px;font-size:26.5px;color:#000;right:1142px;">11.27</div>
<div class="t" style="top:937.1px;font-size:26.5px;color:#000;font-weight:bold;left:58px;">Total Sales</div>
<div class="t" style="top:937.1px;font-size:26.5px;color:#000;font-weight:bold;right:1273px;">23,537</div>
<div class="t" style="top:937.1px;font-size:26.5px;color:#000;font-weight:bold;left:510px;">$</div>
<div class="t" style="top:937.1px;font-size:26.5px;color:#000;font-weight:bold;right:931px;">340,506</div>
<!-- GRID -->
<!-- CHARTS -->
<div class="a" style="left:838px;top:246px;width:786px;height:659px;background:radial-gradient(circle 440px at 0px 0px,rgba(0,0,0,0.5) 0%,rgba(0,0,0,0.24) 45%,rgba(0,0,0,0.06) 80%,rgba(0,0,0,0) 100%),radial-gradient(ellipse 700px 600px at 560px 300px,#4d4d4d 0%,#484848 60%,#424242 100%);background-attachment:scroll"></div>
<svg class="a" style="left:838px;top:246px" width="786" height="659" viewBox="838 246 786 659"><rect x="838" y="351.5" width="786" height="1.2" fill="#6b6b6b"/><rect x="838" y="397.5" width="786" height="1.2" fill="#6b6b6b"/><rect x="838" y="443.5" width="786" height="1.2" fill="#6b6b6b"/><rect x="838" y="489.5" width="786" height="1.2" fill="#6b6b6b"/><rect x="838" y="535.0" width="786" height="1.2" fill="#6b6b6b"/><rect x="838" y="580.5" width="786" height="1.2" fill="#6b6b6b"/><rect x="838" y="626.5" width="786" height="1.2" fill="#6b6b6b"/><rect x="838" y="672.5" width="786" height="1.2" fill="#6b6b6b"/><rect x="838" y="718.5" width="786" height="1.2" fill="#6b6b6b"/><defs><linearGradient id="bar" x1="0" y1="0" x2="0" y2="1"><stop offset="0" stop-color="#6185d5"/><stop offset="0.5" stop-color="#4472c4"/><stop offset="1" stop-color="#355fb5"/></linearGradient><filter id="sh" x="-30%" y="-10%" width="160%" height="120%"><feGaussianBlur stdDeviation="2.5"/></filter></defs><rect x="1498" y="675" width="38" height="91" fill="#1d1d1d" opacity="0.6" filter="url(#sh)"/><rect x="1573" y="496" width="38" height="270" fill="#1d1d1d" opacity="0.6" filter="url(#sh)"/><rect x="1496" y="673" width="38" height="91.5" fill="url(#bar)"/><rect x="1571" y="494.5" width="38" height="270" fill="url(#bar)"/><rect x="838" y="763.5" width="786" height="2" fill="#a6a6a6"/></svg>
<div class="t" style="top:273.8px;font-size:38px;color:#f2f2f2;font-weight:bold;left:1259px;letter-spacing:2.2px;text-shadow:1px 2px 3px rgba(0,0,0,0.7)">Unit Sales</div>
<div class="t" style="left:1112px;top:783.8px;width:400px;text-align:right;font-size:22.5px;color:#d9d9d9;transform-origin:100% 50%;transform:rotate(-45deg)">August</div>
<div class="t" style="left:1187px;top:785.8px;width:400px;text-align:right;font-size:22.5px;color:#d9d9d9;transform-origin:100% 50%;transform:rotate(-45deg)">September</div>
<div class="t" style="left:1262px;top:785.8px;width:400px;text-align:right;font-size:22.5px;color:#d9d9d9;transform-origin:100% 50%;transform:rotate(-45deg)">October</div>
<div class="a" style="left:483px;top:321px;width:984px;height:591px;background:#fff;border:1px solid #a6a6a6"></div>
<div class="t" style="top:349.8px;font-size:33px;color:#595959;left:674.5px;width:600px;text-align:center;">Unit Sales</div>
<svg class="a" style="left:770px;top:416px" width="410" height="410" viewBox="770 416 410 410"><path d="M974.5,621L974.50,423.50A197.5,197.5 0 0 1 1145.90,522.87Z" fill="#4472c4" stroke="#fff" stroke-width="2.6" stroke-linejoin="round"/><path d="M974.5,621L1145.90,522.87A197.5,197.5 0 0 1 1020.16,813.15Z" fill="#ed7d31" stroke="#fff" stroke-width="2.6" stroke-linejoin="round"/><path d="M974.5,621L1020.16,813.15A197.5,197.5 0 0 1 930.46,813.53Z" fill="#a5a5a5" stroke="#fff" stroke-width="2.6" stroke-linejoin="round"/><path d="M974.5,621L930.46,813.53A197.5,197.5 0 0 1 815.66,738.37Z" fill="#ffc000" stroke="#fff" stroke-width="2.6" stroke-linejoin="round"/><path d="M974.5,621L815.66,738.37A197.5,197.5 0 0 1 853.57,464.85Z" fill="#5b9bd5" stroke="#fff" stroke-width="2.6" stroke-linejoin="round"/><path d="M974.5,621L853.57,464.85A197.5,197.5 0 0 1 974.50,423.50Z" fill="#70ad47" stroke="#fff" stroke-width="2.6" stroke-linejoin="round"/><path d="M1004.5 439.5v16l3.6-3.4 2.6 5.6 2.3-1-2.5-5.5h5z" fill="#fff" stroke="#000" stroke-width="1" stroke-linejoin="round"/></svg>
<div class="a" style="left:645.5px;top:868px;width:9px;height:9px;background:#4472c4;"></div>
<div class="t" style="top:861.0px;font-size:21.5px;color:#595959;left:668px;">January</div>
<div class="a" style="left:777.5px;top:868px;width:9px;height:9px;background:#ed7d31;"></div>
<div class="t" style="top:861.0px;font-size:21.5px;color:#595959;left:800.5px;">February</div>
<div class="a" style="left:922px;top:868px;width:9px;height:9px;background:#a5a5a5;"></div>
<div class="t" style="top:861.0px;font-size:21.5px;color:#595959;left:946px;">March</div>
<div class="a" style="left:1041.5px;top:868px;width:9px;height:9px;background:#ffc000;"></div>
<div class="t" style="top:861.0px;font-size:21.5px;color:#595959;left:1065.5px;">April</div>
<div class="a" style="left:1144.5px;top:868px;width:9px;height:9px;background:#5b9bd5;"></div>
<div class="t" style="top:861.0px;font-size:21.5px;color:#595959;left:1168.5px;">May</div>
<div class="a" style="left:1243px;top:868px;width:9px;height:9px;background:#70ad47;"></div>
<div class="t" style="top:861.0px;font-size:21.5px;color:#595959;left:1266px;">June</div>
<div class="a" style="left:477.5px;top:315.5px;width:11px;height:11px;border-radius:50%;background:#fff;border:2px solid #9a9a9a"></div>
<div class="a" style="left:969.5px;top:315.5px;width:11px;height:11px;border-radius:50%;background:#fff;border:2px solid #9a9a9a"></div>
<div class="a" style="left:1461.5px;top:315.5px;width:11px;height:11px;border-radius:50%;background:#fff;border:2px solid #9a9a9a"></div>
<div class="a" style="left:477.5px;top:611.5px;width:11px;height:11px;border-radius:50%;background:#fff;border:2px solid #9a9a9a"></div>
<div class="a" style="left:1461.5px;top:611.5px;width:11px;height:11px;border-radius:50%;background:#fff;border:2px solid #9a9a9a"></div>
<div class="a" style="left:477.5px;top:906.5px;width:11px;height:11px;border-radius:50%;background:#fff;border:2px solid #9a9a9a"></div>
<div class="a" style="left:969.5px;top:906.5px;width:11px;height:11px;border-radius:50%;background:#fff;border:2px solid #9a9a9a"></div>
<div class="a" style="left:1461.5px;top:906.5px;width:11px;height:11px;border-radius:50%;background:#fff;border:2px solid #9a9a9a"></div>
<!-- BOTTOM -->
<div class="a" style="left:0px;top:990px;width:1624px;height:29px;background:#e6e6e6;border-top:1px solid #c8c8c8;border-bottom:1px solid #d4d4d4"></div>
<div class="a" style="left:100px;top:990px;width:119px;height:25px;background:#fff;border-left:1px solid #c8c8c8;border-right:1px solid #c8c8c8"></div>
<div class="a" style="left:101px;top:1013px;width:118px;height:2px;background:#217346;"></div>
<div class="t" style="top:998.2px;font-size:12.8px;color:#217346;font-weight:bold;left:-140.5px;width:600px;text-align:center;">Sales by Month</div>
<svg class="a" style="left:24px;top:998px" width="40" height="12" viewBox="0 0 40 12"><path d="M8 2.5L4 6l4 3.5z" fill="#b8b8b8"/><path d="M32 2.5L36 6l-4 3.5z" fill="#b8b8b8"/></svg>
<svg class="a" style="left:250px;top:994px" width="20" height="20" viewBox="0 0 20 20"><circle cx="10" cy="10" r="7.6" fill="none" stroke="#7a7a7a" stroke-width="1.2"/><path d="M10 6v8M6 10h8" stroke="#7a7a7a" stroke-width="1.6"/></svg>
<div class="a" style="left:1152px;top:1000px;width:2px;height:2px;background:#a8a8a8;"></div>
<div class="a" style="left:1152px;top:1004px;width:2px;height:2px;background:#a8a8a8;"></div>
<div class="a" style="left:1152px;top:1008px;width:2px;height:2px;background:#a8a8a8;"></div>
<div class="a" style="left:1169px;top:998px;width:455px;height:14px;background:#fff;border:1px solid #b4b4b4;border-right:none"></div>
<div class="a" style="left:1184px;top:998px;width:1px;height:14px;background:#b4b4b4;"></div>
<svg class="a" style="left:1172px;top:1000px" width="10" height="10" viewBox="0 0 10 10"><path d="M7 1.5L3 5l4 3.5z" fill="#444"/></svg>
<div class="a" style="left:0px;top:1019px;width:1624px;height:21px;background:#f3f2f1;"></div>
<svg class="a" style="left:7px;top:1021px" width="18" height="16" viewBox="0 0 18 16"><path d="M1.5 1.5h13v3h-13zM1.5 4.5v9h6" fill="none" stroke="#555" stroke-width="1"/><path d="M3.5 7h4M3.5 9.5h3" stroke="#555" stroke-width="1"/><circle cx="12" cy="11" r="3.5" fill="none" stroke="#555" stroke-width="1"/><circle cx="12" cy="11" r="1.6" fill="#555"/></svg>
<div class="t" style="top:1023.0px;font-size:10.9px;color:#333;left:1352px;">Average: 1737</div>
<div class="t" style="top:1023.0px;font-size:10.9px;color:#333;left:1478px;">Count: 14</div>
<div class="t" style="top:1023.0px;font-size:10.9px;color:#333;left:1544px;">Sum: 10422</div>
<div class="a" style="left:1619px;top:1019px;width:5px;height:21px;background:#c8c8c8;"></div>
<!-- CALLOUT -->
<div class="t" style="top:106.5px;font-size:13px;color:#666;left:927px;">S</div>
<svg class="a" style="left:0;top:0" width="1624" height="160" viewBox="0 0 1624 160"><defs><filter id="csh" x="-5%" y="-20%" width="115%" height="150%"><feGaussianBlur stdDeviation="2"/></filter></defs><ellipse cx="773.6" cy="49.3" rx="91.5" ry="24" fill="none" stroke="#6a2ba0" stroke-width="3.8"/><path d="M934 101.5L874 64.5" stroke="#6a2ba0" stroke-width="4.4"/><path d="M865 59.3L881.5 60.8L873.6 72.5z" fill="#6a2ba0" stroke="#6a2ba0" stroke-width="1.2" stroke-linejoin="round"/><rect x="935" y="69" width="344" height="74" rx="7" fill="#000" opacity="0.4" filter="url(#csh)"/><rect x="932.5" y="66.5" width="344" height="73" rx="7" fill="#fff" stroke="#6a2ba0" stroke-width="3.8"/></svg>
<div class="t" style="top:81.7px;font-size:19.3px;color:#000;font-weight:bold;left:804px;width:600px;text-align:center;">The two Contextual tabs appear</div>
<div class="t" style="top:103.7px;font-size:19.3px;color:#000;font-weight:bold;left:804px;width:600px;text-align:center;">because the Pie chart is activated.</div>
</body></html>
